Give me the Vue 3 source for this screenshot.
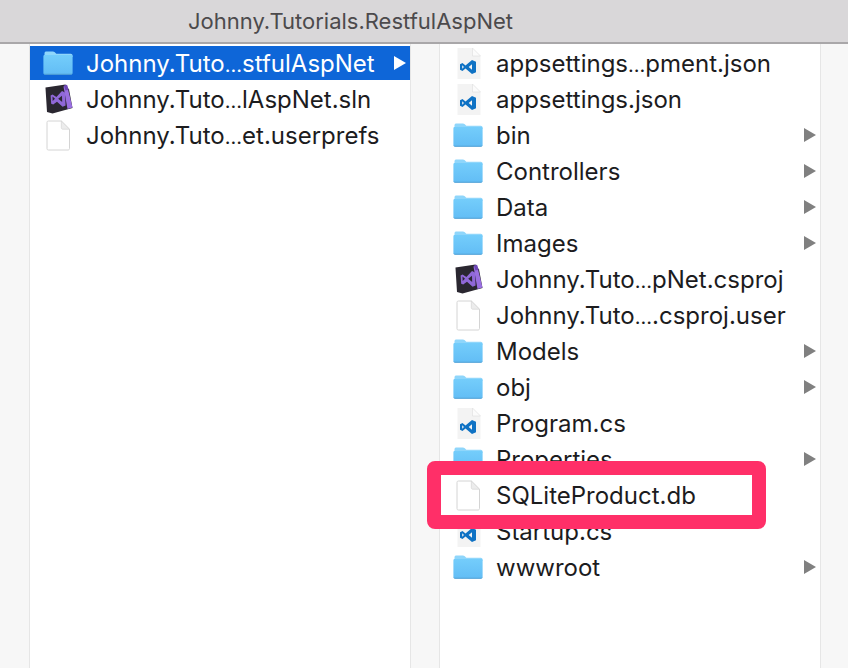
<script setup>
const leftRows = [
  { name: 'Johnny.Tuto…stfulAspNet', icon: 'folder', arrow: true, selected: true },
  { name: 'Johnny.Tuto…lAspNet.sln', icon: 'vs' },
  { name: 'Johnny.Tuto…et.userprefs', icon: 'file' }
]

const rightRows = [
  { name: 'appsettings…pment.json', icon: 'code' },
  { name: 'appsettings.json', icon: 'code' },
  { name: 'bin', icon: 'folder', arrow: true },
  { name: 'Controllers', icon: 'folder', arrow: true },
  { name: 'Data', icon: 'folder', arrow: true },
  { name: 'Images', icon: 'folder', arrow: true },
  { name: 'Johnny.Tuto…pNet.csproj', icon: 'vs' },
  { name: 'Johnny.Tuto….csproj.user', icon: 'file' },
  { name: 'Models', icon: 'folder', arrow: true },
  { name: 'obj', icon: 'folder', arrow: true },
  { name: 'Program.cs', icon: 'code' },
  { name: 'Properties', icon: 'folder', arrow: true },
  { name: 'SQLiteProduct.db', icon: 'file', marked: true },
  { name: 'Startup.cs', icon: 'code' },
  { name: 'wwwroot', icon: 'folder', arrow: true }
]

const columns = [leftRows, rightRows]

// the ellipsis gets its own span, Finder's is narrower than Inter's
function nameParts(name) {
  return name.split('…')
}
</script>

<template>
  <div class="window">
    <svg class="defs" width="0" height="0">
      <defs>
        <linearGradient id="folderFill" x1="0" y1="0" x2="0" y2="1">
          <stop offset="0" stop-color="#74cdfb" />
          <stop offset="1" stop-color="#62bdf5" />
        </linearGradient>
        <symbol id="folder" viewBox="0 0 30 24">
          <path d="M1.500 4V2.200C1.500 1 2.300.4 3.400.4h6.400c.9 0 1.400.3 2 .9l1.500 1.500h14.500c1 0 1.700.7 1.700 1.700V6H1.500z" fill="#8fd6fb" />
          <path d="M.4 5.400c0-.9.6-1.400 1.500-1.400h26.200c.9 0 1.500.5 1.500 1.400v16.300c0 1.100-.7 1.800-1.800 1.800H2.200c-1.100 0-1.800-.7-1.800-1.800z" fill="url(#folderFill)" />
          <path d="M.4 21.700v.3c0 1 .7 1.700 1.800 1.700h25.600c1.100 0 1.800-.7 1.800-1.700v-.3c0 .7-.6 1-1.300 1H1.700c-.7 0-1.300-.3-1.300-1z" fill="#4f9fd4" />
        </symbol>
        <symbol id="file" viewBox="0 0 24 31">
          <path d="M1 2.500C1 1.500 1.600 1 2.500 1h12.800L23.500 9.200v19.300c0 1-.6 1.500-1.500 1.500H2.500c-.9 0-1.500-.5-1.500-1.500z" fill="#fff" stroke="#d4d4d4" />
          <path d="M15.300 1v6.700c0 .9.600 1.500 1.500 1.500h6.700z" fill="#ececec" stroke="#d4d4d4" stroke-width=".7" />
        </symbol>
        <symbol id="code" viewBox="0 0 24 31">
          <path d="M.5 0h15L23.500 8v23H.5z" fill="#f3f3f3" />
          <path d="M15.500 0v8h8z" fill="#fbfbfb" stroke="#dedede" stroke-width=".6" />
          <path d="M15 12l4 1.700v10.600L15 26l-6.500-5.400-3 2.300L3 21.800v-5.600l2.500-1.100 3 2.300zM5.200 17.200v3.600L7 19zM15 16.200L11.700 19l3.300 2.800z" fill="#0f72c4" fill-rule="evenodd" />
        </symbol>
        <symbol id="vs" viewBox="0 0 28 30">
          <path d="M.5 3.500L20.500.5 24 5.500l3.500 18.500-20 5.500L2 28z" fill="#2a2730" />
          <path d="M18.500 2.500L22 1l5.500 22.500-5 1.500z" fill="#9a6fe0" />
          <path d="M19 1.500l3-.8 1.500 5-3 .8z" fill="#6d47b5" />
          <path d="M17 7l3 1.600.6 12.900-3 1.200-5.600-5-3.800 2.900-2-.9-.6-8.200 2-1.100 3.800 2.500zM7.500 12.600l.2 4.400 2.300-2.300zM17 11.700l-3.800 3 4 3.400z" fill="#9068d8" fill-rule="evenodd" />
        </symbol>
      </defs>
    </svg>

    <header class="titlebar">Johnny.Tutorials.RestfulAspNet</header>

    <div class="browser">
      <section v-for="(rows, c) in columns" :key="c" class="column">
        <div
          v-for="row in rows"
          :key="row.name"
          class="row"
          :class="{ selected: row.selected, marked: row.marked }"
        >
          <span class="icon-box">
            <svg :class="'icon-' + row.icon"><use :href="'#' + row.icon" /></svg>
          </span>
          <span class="name">
            <template v-for="(part, p) in nameParts(row.name)" :key="p"><span v-if="p > 0" class="dots">…</span>{{ part }}</template>
          </span>
          <span v-if="row.arrow" class="arrow"></span>
        </div>
      </section>
    </div>

    <div class="annotation"></div>
  </div>
</template>

<style>
html, body {
  margin: 0;
  background: #f7f7f7;
}
</style>

<style scoped>
.window {
  position: relative;
  width: 848px;
  height: 668px;
  overflow: hidden;
  display: flex;
  flex-direction: column;
  font-family: Inter, "Liberation Sans", sans-serif;
  background: #f7f7f7;
}

.defs {
  position: absolute;
}

.titlebar {
  height: 42px;
  line-height: 42px;
  padding-left: 188px;
  flex: none;
  background: #d9d7d9;
  border-bottom: 2px solid #a9a7a9;
  color: #4c4a4c;
  font-size: 22px;
}

.browser {
  flex: 1;
  display: flex;
  gap: 28px;
  padding-left: 29px;
}

.column {
  width: 380px;
  padding-top: 1px;
  background: #fff;
  border-left: 1px solid #e6e6e6;
  border-right: 1px solid #e6e6e6;
}

.row {
  position: relative;
  height: 34px;
  margin: 2px 0;
  display: flex;
  align-items: center;
  color: #1c1c1e;
  font-size: 24px;
  white-space: nowrap;
}

.row:first-child {
  margin-top: 1px;
}

.row.selected {
  background: #0e66d8;
  color: #fff;
}

.row.marked {
  z-index: 2;
}

.icon-box {
  width: 56px;
  flex: none;
  display: flex;
  padding-left: 13px;
  box-sizing: border-box;
}

.icon-folder {
  width: 30px;
  height: 24px;
}

.icon-file {
  width: 24px;
  height: 31px;
  margin-left: 3px;
}

.icon-code {
  width: 24px;
  height: 31px;
  margin-left: 4px;
}

.icon-vs {
  width: 28px;
  height: 30px;
  margin-left: 2px;
}

.name {
  flex: 1;
}

.dots {
  font-size: 20px;
}

.arrow {
  width: 0;
  height: 0;
  margin-right: 4px;
  border-left: 12px solid #808080;
  border-top: 7px solid transparent;
  border-bottom: 7px solid transparent;
}

.selected .arrow {
  border-left-color: #fff;
}

.annotation {
  position: absolute;
  left: 427px;
  top: 461px;
  width: 311px;
  height: 40px;
  z-index: 1;
  background: #fff;
  border: 14px solid #ff2f68;
  border-radius: 8px;
}
</style>
